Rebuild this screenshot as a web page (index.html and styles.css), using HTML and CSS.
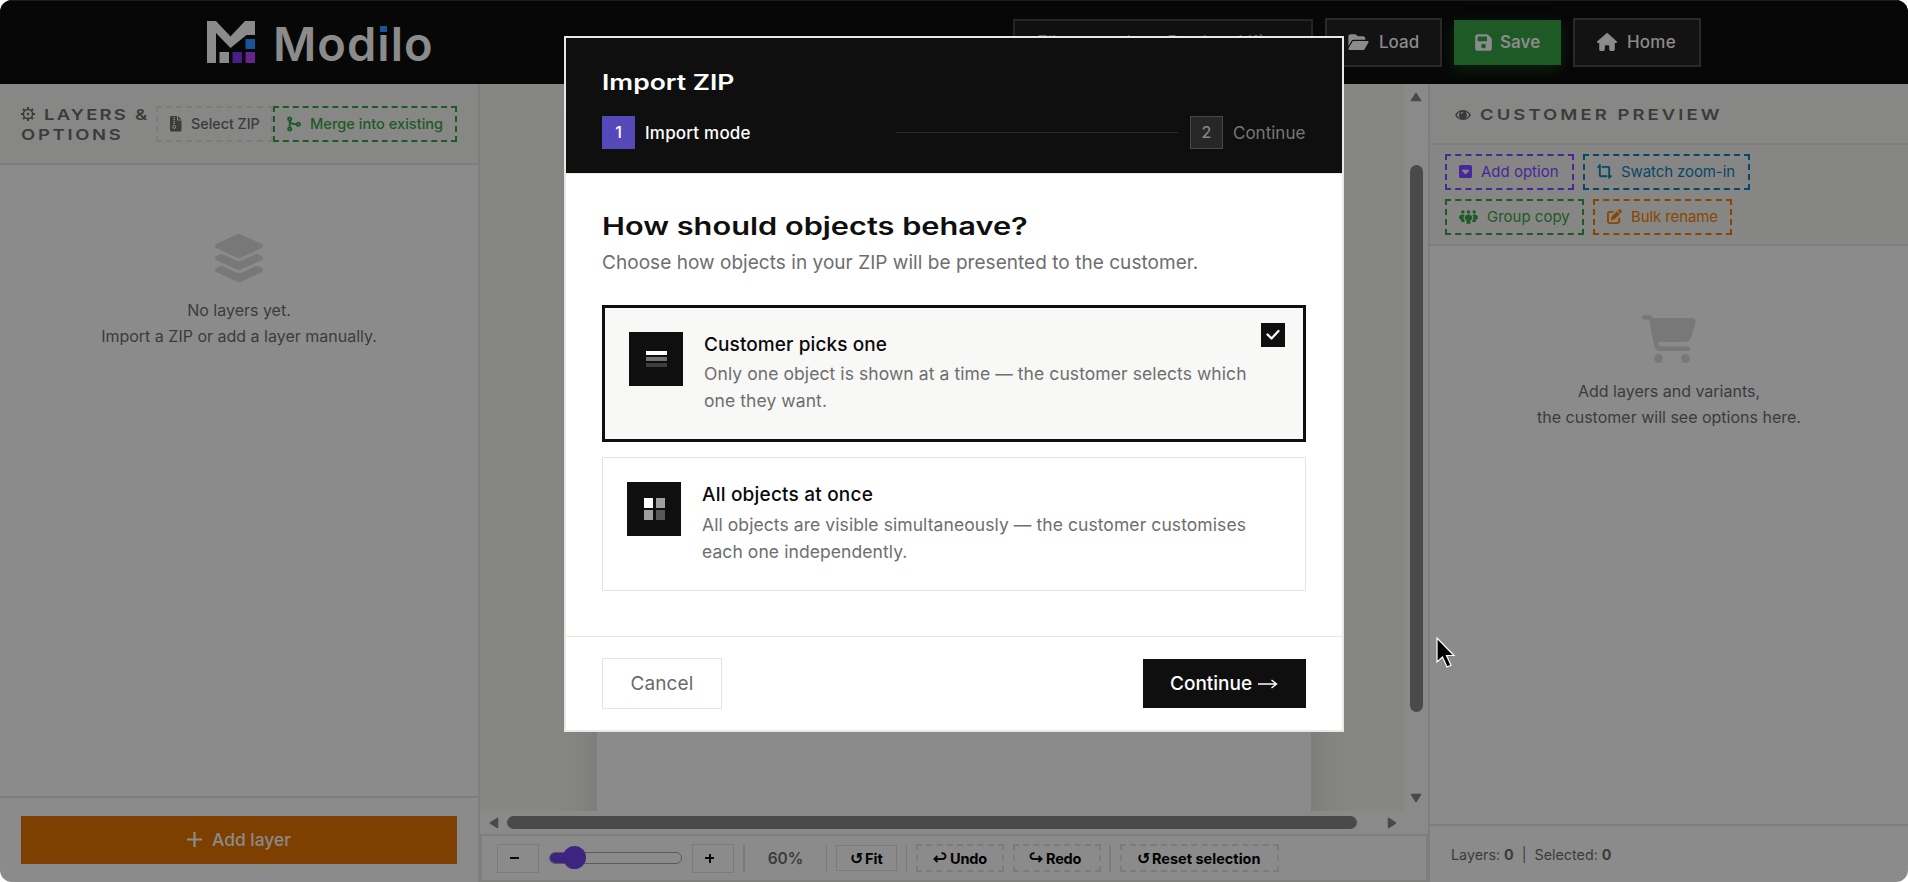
FILE: index.html
```html
<!DOCTYPE html>
<html lang="en">
<head>
<meta charset="utf-8">
<title>Modilo</title>
<link rel="stylesheet" href="styles.css">
</head>
<body>
<div class="app">
  <header class="topbar">
    <div class="brand">
      <svg class="brand-mark" width="48" height="42" viewBox="0 0 48 42">
        <path fill="#8b8b8b" d="M0 0h9l14.500 15.500L38 0h10v14h-8.500L23.500 27 9 12v30H0z"/>
        <path fill="#8b8b8b" d="M12.500 31h9.500v11h-9.500z"/>
        <path fill="#17549a" d="M38.500 18h9.500v10h-9.500z"/>
        <path fill="#45208a" d="M25.500 31h9.500v11h-9.500z"/>
        <path fill="#64258c" d="M38.500 31h9.500v11h-9.500z"/>
      </svg>
      <span class="wordmark">Mod<span class="wm-i">i</span>lo</span>
    </div>
    <div class="top-actions">
      <div class="name-field">File name (e.g. Product V1)</div>
      <button class="tbtn load">
        <svg width="21" height="18" viewBox="0 0 576 512"><path d="M88.700 223.800L0 375.800V96C0 60.700 28.700 32 64 32H181.500c17 0 33.300 6.700 45.300 18.700l26.500 26.500c12 12 28.300 18.700 45.300 18.700H416c35.300 0 64 28.700 64 64v32H144c-22.800 0-43.800 12.100-55.300 31.800zm27.600 16.100C122.100 230 132.600 224 144 224H544c11.500 0 22 6.100 27.700 16.100s5.700 22.200-.1 32.100l-112 192C453.900 474 443.400 480 432 480H32c-11.500 0-22-6.100-27.700-16.100s-5.700-22.200 .1-32.100l112-192z"/></svg>
        <span>Load</span></button>
      <button class="tbtn save">
        <svg width="17" height="19" viewBox="0 0 448 512"><path d="M64 32C28.700 32 0 60.700 0 96V416c0 35.300 28.700 64 64 64H384c35.300 0 64-28.700 64-64V173.300c0-17-6.700-33.300-18.700-45.300L352 50.700C340 38.700 323.700 32 306.700 32H64zm0 96c0-17.700 14.300-32 32-32H288c17.700 0 32 14.300 32 32v64c0 17.700-14.300 32-32 32H96c-17.700 0-32-14.300-32-32V128zM224 288a64 64 0 1 1 0 128 64 64 0 1 1 0-128z"/></svg>
        <span>Save</span></button>
      <button class="tbtn home">
        <svg width="20" height="18" viewBox="0 0 576 512"><path d="M575.800 255.500c0 18-15 32.100-32 32.100h-32l.7 160.200c0 2.700-.2 5.400-.5 8.100V472c0 22.100-17.900 40-40 40H392c-22.100 0-40-17.900-40-40V384c0-17.700-14.300-32-32-32H256c-17.700 0-32 14.300-32 32v88c0 22.100-17.900 40-40 40H104c-22.100 0-40-17.900-40-40V287.600H32c-18 0-32-14-32-32.100c0-9 3-17 10-24L266.400 8c7-7 15-8 22-8s15 2 21 7L564.800 231.500c8 7 12 15 11 24z"/></svg>
        <span>Home</span></button>
    </div>
  </header>

  <main class="workspace">
    <aside class="left">
      <div class="left-head">
        <h2 class="caps layers-title"><svg class="gear" width="14" height="14" viewBox="0 0 14 14"><circle cx="7" cy="7" r="4.600" fill="none" stroke="#3b3b3b" stroke-width="1.500"/><circle cx="7" cy="7" r="1.300" fill="#3b3b3b"/><path stroke="#3b3b3b" stroke-width="2" d="M7 0v2.500M7 11.500V14M0 7h2.500M11.500 7H14M2 2l1.800 1.800M10.200 10.200L12 12M12 2l-1.800 1.800M3.800 10.200L2 12"/></svg><span class="cap-text first">LAYERS &amp;</span><br><span class="cap-text">OPTIONS</span></h2>
        <button class="dash zip">
          <svg width="12" height="16" viewBox="0 0 12 16"><path fill="#3b3b3b" d="M1.500 0H7v4.500h4.500V14a1.600 1.600 0 0 1-1.600 1.600H1.600A1.600 1.600 0 0 1 0 14V1.600A1.600 1.600 0 0 1 1.500 0zM8 0l3.500 3.600H8z"/><path fill="none" stroke="#888885" d="M4.200 1v8" stroke-dasharray="1.200 .8" stroke-width="1.600"/><circle cx="4.200" cy="11" r="1.500" fill="none" stroke="#888885"/></svg>
          <span>Select ZIP</span></button>
        <button class="dash merge">
          <svg width="14" height="16" viewBox="0 0 14 16" fill="none" stroke="#1d5a26" stroke-width="1.800"><circle cx="2.700" cy="2.900" r="1.600"/><circle cx="2.700" cy="13.100" r="1.600"/><circle cx="11.300" cy="8.300" r="1.600"/><path d="M2.700 4.500v7M2.700 5c1 3 3 3.300 7 3.300"/></svg>
          <span>Merge into existing</span></button>
      </div>
      <div class="left-body">
        <svg width="54" height="48" viewBox="0 0 576 512" fill="#787878"><path d="M264.500 5.200c14.900-6.900 32.100-6.900 47 0l218.600 101c8.500 3.900 13.900 12.400 13.900 21.800s-5.400 17.900-13.900 21.800l-218.600 101c-14.900 6.900-32.100 6.900-47 0L45.900 149.800C37.400 145.800 32 137.300 32 128s5.400-17.900 13.900-21.800L264.500 5.200zM476.900 209.600l53.200 24.600c8.500 3.900 13.900 12.400 13.900 21.800s-5.400 17.900-13.900 21.800l-218.600 101c-14.900 6.900-32.100 6.900-47 0L45.900 277.800C37.400 273.800 32 265.300 32 256s5.400-17.900 13.900-21.800l53.200-24.600 152 70.200c23.400 10.800 50.400 10.800 73.800 0l152-70.200zm-152 198.200l152-70.200 53.200 24.600c8.500 3.900 13.900 12.400 13.900 21.800s-5.400 17.900-13.900 21.800l-218.600 101c-14.900 6.900-32.100 6.900-47 0L45.900 405.800C37.400 401.800 32 393.300 32 384s5.400-17.900 13.900-21.800l53.200-24.600 152 70.200c23.400 10.800 50.400 10.800 73.800 0z"/></svg>
        <p class="empty">No layers yet.<br>Import a ZIP or add a layer manually.</p>
      </div>
      <div class="left-foot">
        <button class="add-layer"><svg width="15" height="15" viewBox="0 0 15 15"><path d="M7.500 0v15M0 7.500h15" stroke="#8b8b8b" stroke-width="2.200"/></svg><span>Add layer</span></button>
      </div>
    </aside>

    <section class="center">
      <div class="scroller">
        <div class="canvas"><div class="paper"></div></div>
        <div class="vbar">
          <svg width="12" height="10" viewBox="0 0 12 10"><path d="M6 1.500L10.500 8.500h-9z" fill="#4a4a4a" stroke="#4a4a4a" stroke-width="1.500" stroke-linejoin="round"/></svg>
          <div class="vthumb"></div>
          <svg width="12" height="10" viewBox="0 0 12 10"><path d="M6 8.500L10.500 1.500h-9z" fill="#4a4a4a" stroke="#4a4a4a" stroke-width="1.500" stroke-linejoin="round"/></svg>
        </div>
      </div>
      <div class="hbar">
        <svg width="10" height="12" viewBox="0 0 10 12"><path d="M1.500 6L8.500 1.500v9z" fill="#4a4a4a" stroke="#4a4a4a" stroke-width="1.500" stroke-linejoin="round"/></svg>
        <div class="hthumb"></div>
        <svg width="10" height="12" viewBox="0 0 10 12"><path d="M8.500 6L1.500 1.500v9z" fill="#4a4a4a" stroke="#4a4a4a" stroke-width="1.500" stroke-linejoin="round"/></svg>
      </div>
      <div class="toolbar">
        <button class="zoom-btn"><span class="minus"></span></button>
        <div class="slider"><div class="track"><div class="fill"></div></div><div class="knob"></div></div>
        <button class="zoom-btn"><span class="plus"></span></button>
        <span class="sep wide s1"></span>
        <span class="pct">60%</span>
        <span class="sep s2"></span>
        <button class="fit"><span class="turn">↺</span><span>Fit</span></button>
        <span class="sep s3"></span>
        <button class="tool undo"><svg width="14" height="12" viewBox="0 0 14 12" fill="none" stroke="#0a0a0a" stroke-width="2"><path d="M4.500 4L1.500 7l3 3M2 7h7.500a2.900 2.900 0 1 0-1-5.600"/></svg><span>Undo</span></button>
        <button class="tool redo"><svg width="14" height="12" viewBox="0 0 14 12" fill="none" stroke="#0a0a0a" stroke-width="2"><path d="M9.500 4l3 3-3 3M12 7H4.500a2.900 2.900 0 1 1 1-5.600"/></svg><span>Redo</span></button>
        <span class="sep wide s4"></span>
        <button class="tool reset"><span class="turn">↺</span><span>Reset selection</span></button>
      </div>
    </section>

    <aside class="right">
      <div class="right-head">
        <svg width="16" height="10" viewBox="0 0 16 10"><path fill="#3b3b3b" fill-rule="evenodd" d="M0 5C2 1.600 4.800 0 8 0s6 1.600 8 5c-2 3.400-4.800 5-8 5S2 8.400 0 5zm1.900 0C3.200 7.200 4.400 8 5.600 8.400a4.400 4.400 0 0 1 0-6.800C4.400 2 3.200 2.800 1.900 5zm12.200 0C12.800 2.800 11.600 2 10.400 1.600a4.400 4.400 0 0 1 0 6.800C11.600 8 12.800 7.200 14.100 5zM8 1.800A2.300 2.300 0 0 0 5.800 4l.9.200A1.600 1.600 0 0 1 8 2.700z"/></svg>
        <h2 class="caps"><span class="cap-text preview">CUSTOMER PREVIEW</span></h2>
      </div>
      <div class="right-tools">
        <div class="row">
          <button class="dash add-option"><svg width="13" height="15" viewBox="0 0 448 512" fill="#45289a"><path d="M384 480c35.300 0 64-28.700 64-64V96c0-35.300-28.700-64-64-64H64C28.700 32 0 60.700 0 96V416c0 35.300 28.700 64 64 64H384zM224 352c-6.700 0-13-2.800-17.600-7.700l-104-112c-6.500-7-8.200-17.200-4.400-25.900s12.500-14.400 22-14.400H328c9.500 0 18.200 5.700 22 14.400s2.100 18.900-4.400 25.900l-104 112c-4.500 4.900-10.900 7.700-17.600 7.700z"/></svg><span>Add option</span></button>
          <button class="dash swatch"><svg width="15" height="15" viewBox="0 0 512 512" fill="#06476b"><path d="M128 32c0-17.700-14.300-32-32-32S64 14.300 64 32V64H32C14.300 64 0 78.300 0 96s14.300 32 32 32H64V384c0 35.300 28.700 64 64 64H352V384H128V32zM384 480c0 17.700 14.300 32 32 32s32-14.300 32-32V448h32c17.700 0 32-14.300 32-32s-14.300-32-32-32H448L448 128c0-35.300-28.700-64-64-64L160 64v64l224 0V480z"/></svg><span>Swatch zoom-in</span></button>
        </div>
        <div class="row">
          <button class="dash group"><svg width="19" height="14" viewBox="0 0 19 14" fill="#1d5a26"><circle cx="3.800" cy="2" r="1.700"/><circle cx="9.500" cy="2" r="1.700"/><circle cx="15.200" cy="2" r="1.700"/><path d="M3.800 4.400c.8 0 1.500.2 2 .6C4.700 6 4.300 7.500 4.700 9l1 1.500V12H2.300V10C.8 9.200 0 8.300 0 7.200 0 5.500 1.600 4.400 3.800 4.400zM15.200 4.400c-.8 0-1.500.2-2 .6 1.100 1 1.500 2.500 1.100 4l-1 1.500V12h3.400V10c1.500-.8 2.300-1.700 2.300-2.800 0-1.700-1.600-2.800-3.800-2.800z"/><path d="M9.500 4.400c2.300 0 3.800 1.300 3.800 3.200 0 1.300-.8 2.200-1.800 2.900v3.200h-4v-3.200c-1-.7-1.800-1.600-1.800-2.900 0-1.900 1.500-3.200 3.800-3.200z"/></svg><span>Group copy</span></button>
          <button class="dash rename"><svg width="15" height="15" viewBox="0 0 512 512" fill="#8a4600"><path d="M471.600 21.700c-21.900-21.900-57.300-21.900-79.200 0L362.300 51.700l97.900 97.900 30.100-30.100c21.900-21.900 21.900-57.300 0-79.200L471.600 21.700zm-299.200 220c-6.100 6.100-10.800 13.600-13.500 21.900l-29.600 88.800c-2.900 8.600-.6 18.100 5.800 24.600s15.900 8.700 24.600 5.800l88.800-29.600c8.200-2.700 15.700-7.400 21.900-13.500L437.700 172.300 339.700 74.300 172.400 241.700zM96 64C43 64 0 107 0 160V416c0 53 43 96 96 96H352c53 0 96-43 96-96V320c0-17.700-14.300-32-32-32s-32 14.300-32 32v96c0 17.700-14.300 32-32 32H96c-17.700 0-32-14.300-32-32V160c0-17.700 14.300-32 32-32h96c17.700 0 32-14.300 32-32s-14.300-32-32-32H96z"/></svg><span>Bulk rename</span></button>
        </div>
      </div>
      <div class="right-body">
        <svg width="54" height="48" viewBox="0 0 576 512" fill="#787878"><path d="M0 24C0 10.700 10.700 0 24 0H69.500c22 0 41.500 12.800 50.600 32h411c26.300 0 45.500 25 38.600 50.400l-41 152.300c-8.500 31.400-37 53.300-69.500 53.300H170.700l5.400 28.500c2.200 11.300 12.100 19.500 23.600 19.500H488c13.300 0 24 10.700 24 24s-10.700 24-24 24H199.700c-34.600 0-64.300-24.600-70.700-58.500L77.400 54.500c-.7-3.800-4-6.500-7.900-6.500H24C10.700 48 0 37.300 0 24zM128 464a48 48 0 1 1 96 0 48 48 0 1 1 -96 0zm336-48a48 48 0 1 1 0 96 48 48 0 1 1 0-96z"/></svg>
        <p class="empty">Add layers and variants,<br>the customer will see options here.</p>
      </div>
      <div class="right-foot">Layers: <b>0</b> &nbsp;|&nbsp; Selected: <b>0</b></div>
    </aside>
  </main>
</div>

<div class="modal">
  <div class="m-head">
    <h1 class="m-title">Import ZIP</h1>
    <div class="steps">
      <span class="num on">1</span><span class="step-on">Import mode</span>
      <span class="line"></span>
      <span class="num">2</span><span class="step-off">Continue</span>
    </div>
  </div>
  <div class="m-body">
    <h2 class="m-question">How should objects behave?</h2>
    <p class="m-sub">Choose how objects in your ZIP will be presented to the customer.</p>
    <div class="card selected">
      <div class="tile"><svg width="21" height="18" viewBox="0 0 21 18"><path fill="#fff" d="M0 1h21v4H0z"/><path fill="#737373" d="M0 7h21v4H0z"/><path fill="#3d3d3d" d="M0 13h21v4H0z"/></svg></div>
      <div class="c-text"><h3 class="t1">Customer picks one</h3><p>Only one object is shown at a time — the customer selects which<br>one they want.</p></div>
      <div class="check"><svg width="14" height="12" viewBox="0 0 14 12"><path d="M1.500 5.500l4 4L12.500 2" fill="none" stroke="#fff" stroke-width="2.300" stroke-linecap="round" stroke-linejoin="round"/></svg></div>
    </div>
    <div class="card">
      <div class="tile"><svg width="21" height="22" viewBox="0 0 21 22"><path fill="#fff" d="M0 0h9v10H0z"/><path fill="#9f9f9f" d="M12 0h9v10h-9zM0 12h9v10H0z"/><path fill="#575757" d="M12 12h9v10h-9z"/></svg></div>
      <div class="c-text"><h3 class="t2">All objects at once</h3><p>All objects are visible simultaneously — the customer customises<br>each one independently.</p></div>
    </div>
  </div>
  <div class="m-foot">
    <button class="cancel">Cancel</button>
    <button class="continue"><span>Continue</span><svg width="20" height="10" viewBox="0 0 20 10"><path d="M0 5h18M13.500 1L18.500 5l-5 4" fill="none" stroke="#fff" stroke-width="1.400"/></svg></button>
  </div>
</div>

<svg class="pointer" width="20" height="34" viewBox="0 0 20 34"><path d="M1 1v24l5.500-5 4.500 10 4-1.800-4.500-9.700H18z" fill="#000" stroke="#fff" stroke-width="1.200"/></svg>
</body>
</html>
```
FILE: styles.css
```css
* { box-sizing: border-box; }
body { margin: 0; width: 1908px; height: 882px; overflow: hidden; background: #fff; position: relative; font-family: "Inter", "Liberation Sans", sans-serif; }
h1, h2, h3, p { margin: 0; }
button { font: inherit; padding: 0; margin: 0; border: 0; border-radius: 0; background: none; display: flex; align-items: center; white-space: nowrap; flex: none; }
svg { display: block; flex: none; }

.app { width: 1908px; height: 882px; border-radius: 12px; overflow: hidden; display: flex; flex-direction: column; background: #8b8b8b; }

/* top bar */
.topbar { height: 84px; flex: none; background: #070707; border-top: 1px solid #1c1e1c; display: flex; justify-content: space-between; padding: 0 207px 0 207px; }
.brand { display: flex; padding-top: 20px; gap: 18px; }
.wordmark { font-size: 47px; line-height: 57px; font-weight: 600; color: #8b8b8b; letter-spacing: 1px; margin-top: -6px; }
.wm-i { position: relative; }
.wm-i::before { content: ""; position: absolute; left: 2px; top: 9px; width: 10px; height: 9px; background: #070707; }
.wm-i::after { content: ""; position: absolute; left: 3px; top: 11px; width: 7px; height: 6px; background: #17549a; }
.top-actions { display: flex; gap: 12px; align-items: flex-start; padding-top: 17px; }
.name-field { width: 300px; height: 47px; margin-top: 1px; border: 2px solid #252525; background: #101010; color: #5a5a5a; font-size: 18px; line-height: 43px; padding-left: 22px; overflow: hidden; white-space: nowrap; }
.tbtn { height: 49px; border: 2px solid #2a2a2a; background: #131313; color: #8b8b8b; font-size: 17px; font-weight: 500; gap: 10px; fill: #8b8b8b; padding-bottom: 1px; }
.load { width: 117px; padding-left: 21px; }
.save { width: 107px; height: 45px; margin-top: 2px; border: 0; background: #1d5a26; padding-left: 21px; font-weight: 600; gap: 8px; box-shadow: 0 4px 14px rgba(29, 90, 38, .35); }
.home { width: 128px; padding-left: 22px; letter-spacing: .2px; }

/* columns */
.workspace { flex: 1; min-height: 0; display: flex; }
.left { width: 480px; flex: none; border-right: 2px solid #7e7e7e; display: flex; flex-direction: column; }
.left-head { height: 81px; border-bottom: 2px solid #7e7e7c; background: #878785; display: flex; align-items: center; padding: 0 21px; }
.layers-title { width: 135px; padding-top: 2px; }
.caps { font-size: 15px; line-height: 20px; font-weight: 600; color: #3b3b3b; white-space: nowrap; }
.gear { display: inline-block; vertical-align: -1px; margin-right: 9px; }
.cap-text { display: inline-block; transform: scaleX(1.23); transform-origin: 0 50%; letter-spacing: 2.2px; }
.cap-text.first { letter-spacing: 1.8px; }
.preview { letter-spacing: 2.5px; }
.dash { height: 36px; border: 2px dashed; font-size: 15px; font-weight: 500; }
.zip { width: 117px; border-color: #7c7c7a; color: #3b3b3b; padding-left: 12px; gap: 9px; font-size: 14.300px; }
.merge { width: 184px; border-color: #1d5a26; color: #1d5a26; padding-left: 12px; gap: 9px; font-size: 14.600px; }
.left-body { flex: 1; display: flex; flex-direction: column; align-items: center; padding-top: 69px; }
.empty { font-size: 16px; line-height: 26px; color: #3b3b3b; text-align: center; margin-top: 15px; white-space: nowrap; }
.left-foot { height: 86px; border-top: 2px solid #7e7e7e; padding: 18px 21px; }
.add-layer { width: 436px; height: 48px; background: #7e4000; color: #8b8b8b; font-size: 17.400px; font-weight: 500; justify-content: center; gap: 10px; padding-bottom: 1px; }

.center { width: 950px; flex: none; border-right: 2px solid #7e7e7e; display: flex; flex-direction: column; }
.scroller { height: 727px; display: flex; }
.canvas { width: 924px; background: #868683; padding-left: 117px; overflow: hidden; }
.paper { width: 714px; height: 900px; background: #8b8b8b; box-shadow: 0 12px 36px rgba(0, 0, 0, .13); }
.vbar { width: 24px; background: #8a8a8a; display: flex; flex-direction: column; align-items: center; padding: 8px 0 8px; }
.vthumb { width: 13px; height: 547px; border-radius: 7px; background: #4a4a4a; margin: 63px 0 81px; }
.hbar { height: 23px; background: #8a8a8a; display: flex; align-items: center; padding-left: 9px; }
.hthumb { width: 850px; height: 13px; border-radius: 7px; background: #4a4a4a; margin: 0 30px 0 8px; }
.toolbar { height: 48px; border: 2px solid #7e7e7c; display: flex; align-items: center; padding-left: 15px; font-weight: 700; font-size: 14.500px; color: #0a0a0a; }
.zoom-btn { width: 42px; height: 29px; border: 1px solid #7b7b7b; padding-left: 12px; }
.minus, .plus { width: 9px; height: 2px; background: #0a0a0a; }
.plus { height: 9px; background: linear-gradient(#0a0a0a, #0a0a0a) 50% 50% / 9px 2px no-repeat, linear-gradient(#0a0a0a, #0a0a0a) 50% 50% / 2px 9px no-repeat; }
.slider { width: 133px; height: 24px; margin: 0 10px; position: relative; display: flex; align-items: center; }
.track { width: 133px; height: 12px; border: 1px solid #5b5b5b; border-radius: 6px; overflow: hidden; }
.fill { width: 25px; height: 12px; background: #3c2480; }
.knob { position: absolute; left: 14px; top: 0; width: 23px; height: 23px; border-radius: 50%; background: #3c2480; }
.sep { width: 1px; height: 27px; background: #7b7b7b; }
.wide { width: 2px; }
.s1 { margin-left: 9px; }
.pct { width: 81px; text-align: center; font-size: 15.500px; font-weight: 600; color: #3b3b3b; }
.s3 { margin: 0 9px; }
.fit { width: 61px; height: 26px; margin-left: 9px; border: 1px solid #7b7b7b; padding-left: 13px; gap: 2px; }
.turn { font-family: "DejaVu Sans", sans-serif; font-size: 16px; width: 13px; }
.tool { height: 28px; border: 2px dashed #7b7b7b; gap: 3px; }
.undo { width: 88px; padding-left: 15px; letter-spacing: -.2px; }
.redo { width: 88px; margin-left: 9px; padding-left: 14px; letter-spacing: -.2px; }
.s4 { margin: 0 9px 0 8px; }
.reset { width: 159px; padding-left: 15px; gap: 2px; }

.right { flex: 1; display: flex; flex-direction: column; }
.right-head { height: 61px; border-bottom: 2px solid #7e7e7c; background: #878785; display: flex; align-items: center; padding: 2px 0 0 25px; gap: 9px; }
.right-tools { height: 101px; border-bottom: 2px solid #7e7e7c; background: #868684; padding: 9px 15px; display: flex; flex-direction: column; gap: 9px; }
.row { display: flex; gap: 9px; }
.right-tools .dash { padding-left: 12px; padding-bottom: 1px; gap: 9px; font-weight: 400; }
.add-option { width: 129px; border-color: #45289a; color: #45289a; }
.swatch { width: 167px; border-color: #06476b; color: #06476b; letter-spacing: -.1px; }
.group { width: 139px; border-color: #1d5a26; color: #1d5a26; }
.rename { width: 139px; border-color: #8a4600; color: #8a4600; letter-spacing: -.1px; }
.right-body { flex: 1; display: flex; flex-direction: column; align-items: center; padding-top: 69px; }
.right-foot { height: 58px; border-top: 2px solid #7e7e7c; padding-left: 21px; line-height: 57px; font-size: 14.300px; color: #3b3b3b; }

/* import dialog */
.modal { position: absolute; left: 564px; top: 36px; width: 780px; height: 696px; border: 2px solid #e8e8e4; background: #fff; display: flex; flex-direction: column; }
.m-head { height: 136px; border-bottom: 1px solid #e8e8e4; background: #0f0f0f; padding: 32px 36px 0; }
.m-title { font-size: 21px; line-height: 26px; font-weight: 600; color: #fff; display: block; width: 200px; transform: scaleX(1.26); transform-origin: 0 50%; }
.steps { display: flex; align-items: center; margin-top: 20px; }
.num { width: 33px; height: 33px; border: 1px solid #484848; background: #272727; color: #858585; font-size: 16px; line-height: 31px; text-align: center; font-weight: 500; flex: none; }
.num.on { border-color: #5548b8; background: #5548b8; color: #fff; }
.step-on { width: 261px; padding-left: 10px; color: #fff; font-size: 17px; font-weight: 500; letter-spacing: .2px; flex: none; }
.line { width: 282px; height: 1px; background: #2c2c2c; margin-right: 12px; flex: none; }
.step-off { padding-left: 10px; color: #777; font-size: 17px; }
.m-body { height: 462px; padding: 36px 36px 0; }
.m-question { font-size: 24.300px; line-height: 32px; font-weight: 600; color: #0f0f0f; width: 340px; white-space: nowrap; transform: scaleX(1.265); transform-origin: 0 50%; }
.m-sub { font-size: 19px; line-height: 28px; color: #6e6e6e; white-space: nowrap; margin-top: 7px; letter-spacing: .04px; }
.card { width: 704px; height: 134px; border: 1px solid #e4e4e4; margin-top: 15px; padding: 24px; display: flex; gap: 21px; position: relative; }
.card.selected { height: 137px; border: 3px solid #0f0f0f; background: #f8f8f6; margin-top: 28px; }
.tile { width: 54px; height: 54px; flex: none; background: #0f0f0f; display: flex; align-items: center; justify-content: center; }
.c-text { white-space: nowrap; }
.c-text h3 { font-size: 19px; line-height: 26px; font-weight: 500; color: #0a0a0a; }
.t1 { letter-spacing: .1px; }
.t2 { letter-spacing: .2px; }
.c-text p { font-size: 17.500px; line-height: 27px; color: #6e6e6e; letter-spacing: .08px; margin-top: 3px; }
.selected .c-text p { margin-top: 2px; }
.check { position: absolute; right: 18px; top: 15px; width: 24px; height: 24px; background: #0f0f0f; display: flex; align-items: center; justify-content: center; }
.m-foot { flex: 1; border-top: 1px solid #e8e8e4; padding: 0 36px; display: flex; align-items: center; justify-content: space-between; }
.cancel { width: 120px; height: 51px; border: 1px solid #e4e4e4; justify-content: center; font-size: 19px; color: #6a6a6a; letter-spacing: .1px; }
.continue { width: 163px; height: 49px; background: #0f0f0f; color: #fff; font-size: 19px; font-weight: 500; padding-left: 27px; gap: 6px; }
.pointer { position: absolute; left: 1436px; top: 637px; }
```
